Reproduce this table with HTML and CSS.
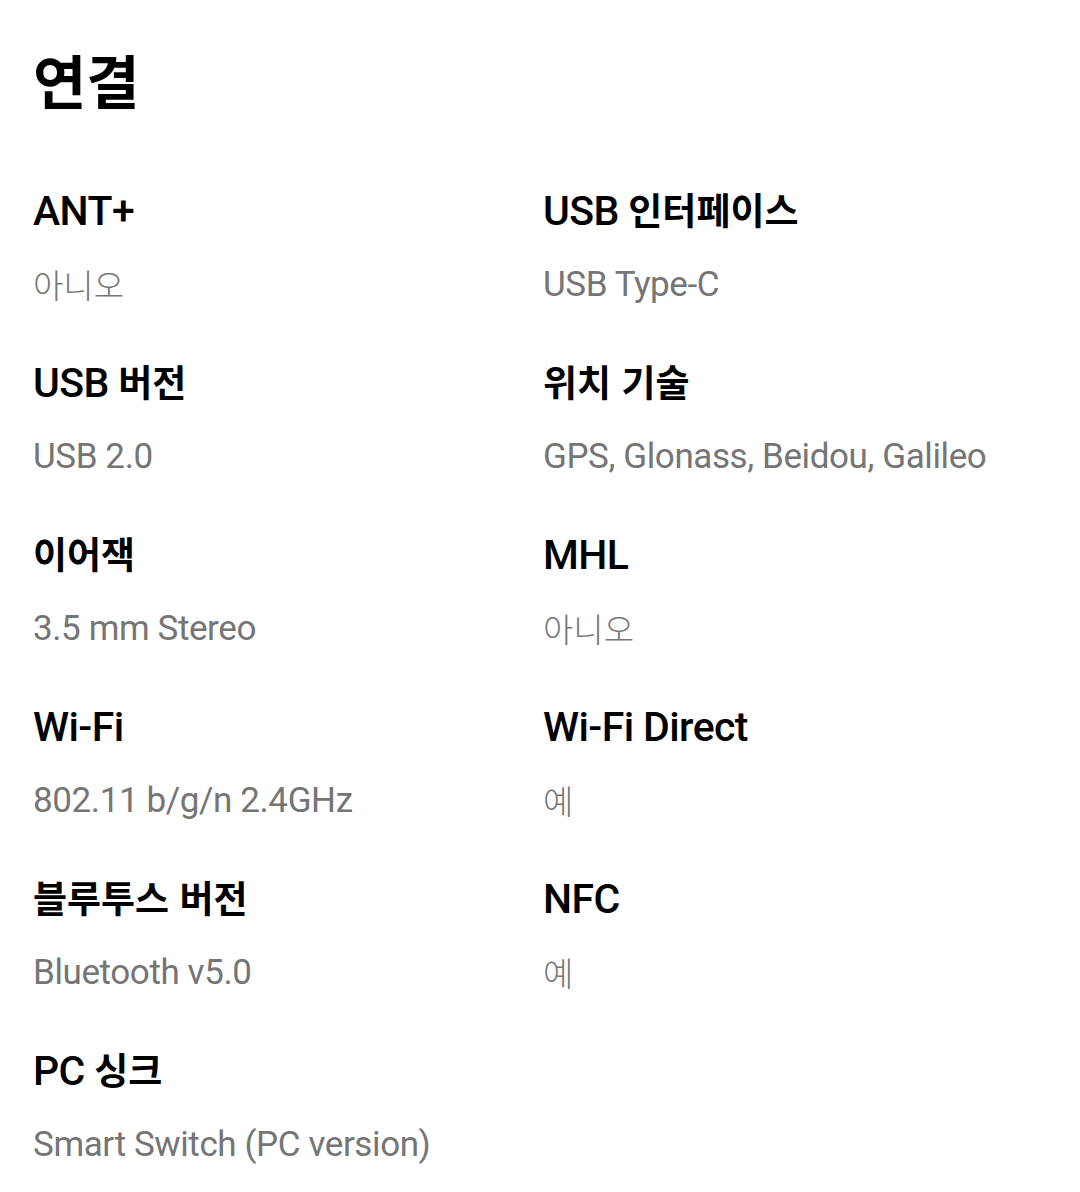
FILE: index.html
```html
<!DOCTYPE html>
<html lang="ko">
<head>
<meta charset="utf-8">
<link rel="stylesheet" href="styles.css">
</head>
<body>
<main class="page">
  <h1 class="title">연결</h1>
  <div class="specs">
    <div class="spec"><div class="label">ANT+</div><div class="value"><span class="ko">아니오</span></div></div>
    <div class="spec"><div class="label">USB <span class="ko">인터페이스</span></div><div class="value">USB Type-C</div></div>
    <div class="spec"><div class="label">USB <span class="ko">버전</span></div><div class="value">USB 2.0</div></div>
    <div class="spec"><div class="label"><span class="ko">위치 기술</span></div><div class="value">GPS, Glonass, Beidou, Galileo</div></div>
    <div class="spec"><div class="label"><span class="ko">이어잭</span></div><div class="value">3.5 mm Stereo</div></div>
    <div class="spec"><div class="label">MHL</div><div class="value"><span class="ko">아니오</span></div></div>
    <div class="spec"><div class="label">Wi-Fi</div><div class="value">802.11 b/g/n 2.4GHz</div></div>
    <div class="spec"><div class="label">Wi-Fi Direct</div><div class="value"><span class="ko">예</span></div></div>
    <div class="spec"><div class="label"><span class="ko">블루투스 버전</span></div><div class="value">Bluetooth v5.0</div></div>
    <div class="spec"><div class="label">NFC</div><div class="value"><span class="ko">예</span></div></div>
    <div class="spec"><div class="label">PC <span class="ko">싱크</span></div><div class="value">Smart Switch (PC version)</div></div>
  </div>
</main>
</body>
</html>
```

FILE: styles.css
```css
html, body {
  margin: 0;
  padding: 0;
  background: #ffffff;
}
.page {
  padding: 39px 0 0 33px;
  font-family: Roboto, "Noto Sans CJK KR", sans-serif;
}
.title {
  margin: 0;
  font-size: 58px;
  line-height: 80px;
  font-weight: 700;
  color: #000000;
  font-family: "Noto Sans CJK KR", sans-serif;
}
.specs {
  margin-top: 67px;
  display: grid;
  grid-template-columns: 510px 1fr;
  row-gap: 48px;
}
.label {
  height: 50px;
  overflow: visible;
  font-size: 41px;
  line-height: 50px;
  font-weight: 500;
  letter-spacing: -0.6px;
  color: #000000;
}
.label .ko {
  font-family: "Noto Sans CJK KR", sans-serif;
  font-size: 37px;
  line-height: 1;
  font-weight: 700;
  letter-spacing: 0;
  vertical-align: 0;
}
.value {
  height: 50px;
  margin-top: 24px;
  font-size: 35px;
  line-height: 50px;
  font-weight: 400;
  letter-spacing: -0.4px;
  color: #757575;
}
.value .ko {
  font-family: "Noto Sans CJK KR", sans-serif;
  font-size: 33px;
  line-height: 1;
  font-weight: 300;
  letter-spacing: 0;
  vertical-align: -2px;
}
```
